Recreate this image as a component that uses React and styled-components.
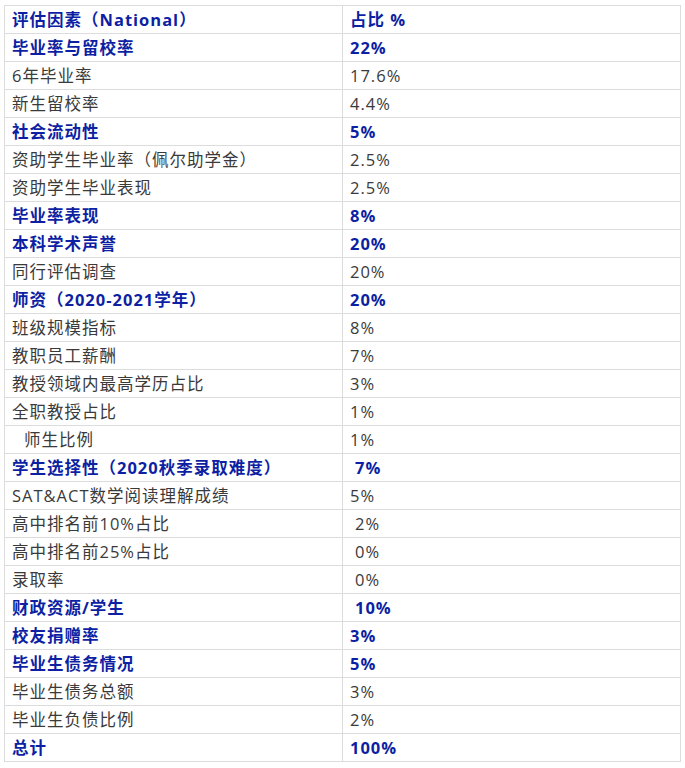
import React from 'react'
import styled, { createGlobalStyle } from 'styled-components'

const rows = [
    ['评估因素（National）', '占比 %', true],
    ['毕业率与留校率', '22%', true],
    ['6年毕业率', '17.6%'],
    ['新生留校率', '4.4%'],
    ['社会流动性', '5%', true],
    ['资助学生毕业率（佩尔助学金）', '2.5%'],
    ['资助学生毕业表现', '2.5%'],
    ['毕业率表现', '8%', true],
    ['本科学术声誉', '20%', true],
    ['同行评估调查', '20%'],
    ['师资（2020-2021学年）', '20%', true],
    ['班级规模指标', '8%'],
    ['教职员工薪酬', '7%'],
    ['教授领域内最高学历占比', '3%'],
    ['全职教授占比', '1%'],
    ['师生比例', '1%', false, 12],
    ['学生选择性（2020秋季录取难度）', '7%', true, 0, 5],
    ['SAT&ACT数学阅读理解成绩', '5%'],
    ['高中排名前10%占比', '2%', false, 0, 5],
    ['高中排名前25%占比', '0%', false, 0, 5],
    ['录取率', '0%', false, 0, 5],
    ['财政资源/学生', '10%', true, 0, 5],
    ['校友捐赠率', '3%', true],
    ['毕业生债务情况', '5%', true],
    ['毕业生债务总额', '3%'],
    ['毕业生负债比例', '2%'],
    ['总计', '100%', true],
]

const App = () => {
    return (
        <>
        <GlobalStyle />
        <Table>
            <colgroup>
                <col width="338" />
                <col />
            </colgroup>
            <tbody>
                {rows.map(([name, value, bold, indentA = 0, indentB = 0], i) => (
                    <Row key={i}>
                        <Cell $bold={bold} $indent={indentA}>{name}</Cell>
                        <Cell $bold={bold} $indent={indentB}>{value}</Cell>
                    </Row>
                ))}
            </tbody>
        </Table>
        </>
    )
}

const GlobalStyle = createGlobalStyle`
    body {
        margin: 0;
        padding: 5px 4px;
        background: #fff;
        font-family: 'Open Sans', 'Noto Sans CJK SC', sans-serif;
    }
`

const Table = styled.table`
    width: 677px;
    border-collapse: collapse;
    table-layout: fixed;
`

const Row = styled.tr`
    height: 28px;
`

const Cell = styled.td`
    border: 1px solid #dcdcdc;
    padding: 0 0 0 ${p => 7 + p.$indent}px;
    font-size: 16.5px;
    letter-spacing: 1px;
    line-height: 26px;
    white-space: nowrap;
    color: ${p => (p.$bold ? '#0d1fa3' : '#3a3a3a')};
    font-weight: ${p => (p.$bold ? 700 : 400)};
`

export default App
